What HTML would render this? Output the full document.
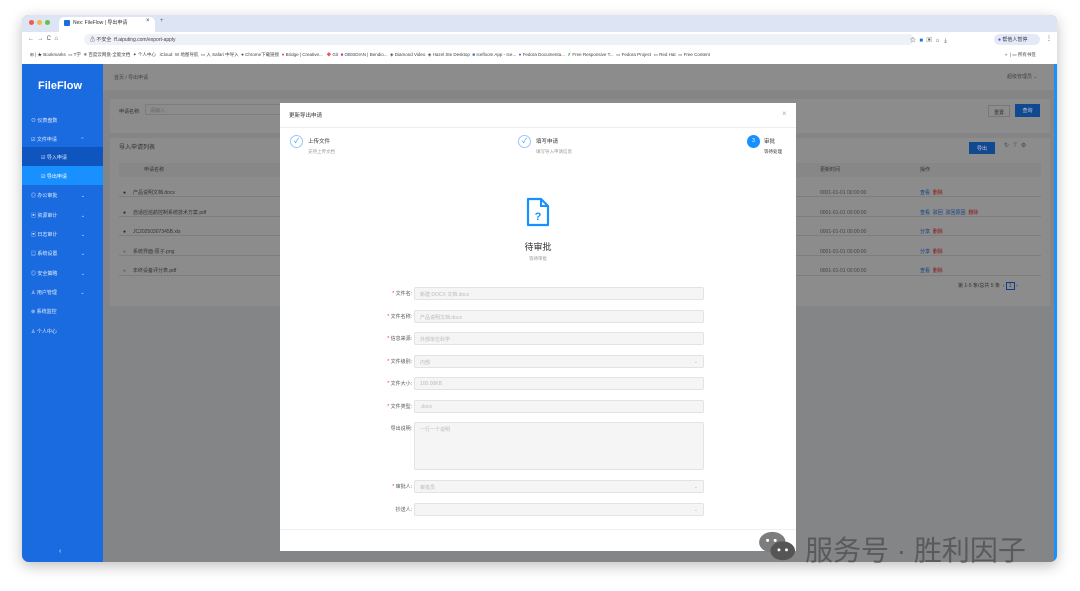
<!DOCTYPE html>
<html><head><meta charset="utf-8"><style>
*{box-sizing:border-box;margin:0;padding:0}
body{width:1080px;height:591px;background:#fff;font-family:"Liberation Sans","Noto Sans CJK SC",sans-serif;position:relative;overflow:hidden;font-size:6px;color:#333}
.a{position:absolute}
.win{left:22px;top:15px;width:1035px;height:547px;border-radius:7px;overflow:hidden;box-shadow:0 4px 14px rgba(0,0,0,.25);background:#848586}
.t{white-space:nowrap}
.row{border-bottom:1px solid #7e7e7e}
.lbl{width:52px;text-align:right;color:#555;font-size:5px}
.inp{left:134px;width:290px;height:13px;background:#f5f5f5;border:1px solid #e3e3e3;border-radius:2px;color:#bbb;font-size:5px;padding:3px 5px}
.star{color:#f5222d}
.side .it{position:absolute;left:9px;color:#dfe9fb;font-size:5px}
</style></head><body>
<div class="a win">
 <div class="a" style="left:0;top:0;width:1035px;height:17px;background:#dde4f3"></div>
 <div class="a" style="left:7px;top:5px;width:5px;height:5px;border-radius:50%;background:#ee5b55"></div>
 <div class="a" style="left:15px;top:5px;width:5px;height:5px;border-radius:50%;background:#f4b942"></div>
 <div class="a" style="left:23px;top:5px;width:5px;height:5px;border-radius:50%;background:#5fc447"></div>
 <div class="a" style="left:37px;top:2px;width:96px;height:15px;background:#fff;border-radius:5px 5px 0 0"></div>
 <div class="a" style="left:42px;top:5px;width:6px;height:6px;background:#1a6fe0;border-radius:1px"></div>
 <div class="a t" style="left:51px;top:4px;font-size:5px;color:#333">Nex: FileFlow | 导出申请</div>
 <div class="a t" style="left:124px;top:3px;font-size:6px">×</div>
 <div class="a t" style="left:138px;top:3px;font-size:6px;color:#666">+</div>
 <div class="a" style="left:0;top:17px;width:1035px;height:32px;background:#fff"></div>
 <div class="a t" style="left:6px;top:21px;font-size:6px;color:#555">←&nbsp; →&nbsp; C&nbsp; ⌂</div>
 <div class="a" style="left:62px;top:19px;width:830px;height:11px;background:#eef1f7;border-radius:6px"></div>
 <div class="a t" style="left:68px;top:21px;font-size:5px;color:#444">⚠ 不安全 &nbsp;ff.aiputing.com/export-apply</div>
 <div class="a t" style="left:888px;top:20px;font-size:6px;color:#555">☆ &nbsp;<span style="color:#1a6fe0">■</span>&nbsp; ▣ &nbsp;⌂ &nbsp; ⤓</div>
 <div class="a" style="left:972px;top:19px;width:46px;height:11px;background:#e3e9f7;border-radius:6px"></div>
 <div class="a t" style="left:976px;top:21px;font-size:5px;color:#334"><span style="color:#6a3fc8">●</span> 帮他人暂停</div>
 <div class="a t" style="left:1024px;top:20px;font-size:6px">⋮</div>
 <div class="a t" style="left:8px;top:37px;font-size:4.5px;color:#444">⊞ | ★ Bookmarks &nbsp;▭ T学 &nbsp;❄ 百度云网盘-全能文档 &nbsp;✦ 个人中心 &nbsp; iCloud &nbsp;W 地图导航 &nbsp;▭ 入 Safari 中导入 &nbsp;● Chrome下载链接 &nbsp;<span style="color:#e33">●</span> Bridge | Creative... &nbsp; <span style="color:#e55">◆</span> Git &nbsp;<span style="color:#c3a">■</span> OBSIDIAN | Bendio... &nbsp;◈ Diamond Video &nbsp;◈ Hazel Ste Desktop &nbsp;<span style="color:#36c">■</span> Icefloom App - Ice... &nbsp;<span style="color:#36c">●</span> Fedora Documenta... &nbsp;<span style="color:#3a3">✗</span> Free Responsive T... &nbsp;▭ Fedora Project &nbsp;▭ Red Hat &nbsp;▭ Free Content</div>
 <div class="a t" style="left:983px;top:37px;font-size:4.5px;color:#444">» &nbsp;| ▭ 所有书签</div>
 <div class="a side" style="left:0;top:49px;width:81px;height:498px;background:#1a6be0">
  <div class="a t" style="left:16px;top:16px;font-size:11px;font-weight:bold;color:#fff">FileFlow</div>
  <div class="it t" style="top:53px">⊙ 仪表盘数</div>
  <div class="it t" style="top:72px">☑ 文件申请 <span style="margin-left:22px">⌃</span></div>
  <div class="a" style="left:0;top:83px;width:81px;height:19px;background:#0e55bf"></div>
  <div class="it t" style="top:90px;left:19px">☑ 导入申请</div>
  <div class="a" style="left:0;top:102px;width:81px;height:19px;background:#1890ff"></div>
  <div class="it t" style="top:109px;left:19px;color:#fff">☑ 导出申请</div>
  <div class="it t" style="top:128px">◎ 办公审批 <span style="margin-left:22px">⌄</span></div>
  <div class="it t" style="top:148px">▣ 资源审计 <span style="margin-left:22px">⌄</span></div>
  <div class="it t" style="top:167px">▣ 日志审计 <span style="margin-left:22px">⌄</span></div>
  <div class="it t" style="top:186px">▤ 系统设置 <span style="margin-left:22px">⌄</span></div>
  <div class="it t" style="top:206px">◎ 安全策略 <span style="margin-left:22px">⌄</span></div>
  <div class="it t" style="top:225px">♙ 用户管理 <span style="margin-left:22px">⌄</span></div>
  <div class="it t" style="top:244px">⊛ 系统监控</div>
  <div class="it t" style="top:264px">♙ 个人中心</div>
  <div class="a t" style="left:37px;top:484px;color:#dfe9fb;font-size:7px">‹</div>
 </div>
 <div class="a" style="left:81px;top:49px;width:954px;height:26px;background:#8c8c8c"></div>
 <div class="a t" style="left:92px;top:59px;font-size:5px;color:#444">首页 / 导出申请</div>
 <div class="a t" style="left:985px;top:58px;font-size:5px;color:#444">超级管理员 ⌄</div>
 <div class="a" style="left:88px;top:84px;width:940px;height:34px;background:#8c8c8c"></div>
 <div class="a t" style="left:97px;top:93px;font-size:5px;color:#333">申请名称:</div>
 <div class="a" style="left:123px;top:89px;width:160px;height:11px;border:1px solid #7d7d7d;background:#8c8c8c;font-size:5px;color:#666;padding:2px 4px">请输入</div>
 <div class="a" style="left:966px;top:90px;width:22px;height:12px;background:#8c8c8c;border:1px solid #777;font-size:5px;text-align:center;padding-top:3px">重置</div>
 <div class="a" style="left:993px;top:89px;width:25px;height:13px;background:#10498f;color:#ccd;font-size:5px;text-align:center;padding-top:3px">查询</div>
 <div class="a" style="left:88px;top:123px;width:940px;height:168px;background:#8c8c8c"></div>
 <div class="a t" style="left:97px;top:127px;font-size:6px;color:#333">导入申请列表</div>
 <div class="a" style="left:947px;top:127px;width:26px;height:12px;background:#10498f;color:#ccd;font-size:5px;text-align:center;padding-top:3px">导出</div>
 <div class="a t" style="left:982px;top:127px;font-size:6px;color:#444">↻ &nbsp;⊤ &nbsp;⚙</div>
 <div class="a" style="left:97px;top:148px;width:922px;height:14px;background:#878787"></div>
 <div class="a t" style="left:122px;top:151px;font-size:5px;color:#333">申请名称</div>
 <div class="a t" style="left:798px;top:151px;font-size:5px;color:#333">更新时间</div>
 <div class="a t" style="left:898px;top:151px;font-size:5px;color:#333">操作</div>
 <div class="a" style="left:97px;top:162px;width:922px;height:100px">
  <div class="row a" style="top:0;width:922px;height:20px"></div>
  <div class="row a" style="top:20px;width:922px;height:20px"></div>
  <div class="row a" style="top:40px;width:922px;height:19px"></div>
  <div class="row a" style="top:59px;width:922px;height:20px"></div>
  <div class="row a" style="top:79px;width:922px;height:20px"></div>
 </div>
 <div class="a t" style="left:101px;top:169px;font-size:5px;color:#333;line-height:19.5px">
  <div><span style="color:#1c2b44">●</span> &nbsp; &nbsp; 产品说明文档.docx</div>
  <div><span style="color:#1c2b44">●</span> &nbsp; &nbsp; 自适应巡航控制系统技术方案.pdf</div>
  <div><span style="color:#1c2b44">●</span> &nbsp; &nbsp; JC20250307345B.xls</div>
  <div><span style="color:#666">●</span> &nbsp; &nbsp; 系统界面-原子.png</div>
  <div><span style="color:#666">●</span> &nbsp; &nbsp; 年终设备评分表.pdf</div>
 </div>
 <div class="a t" style="left:798px;top:169px;font-size:5px;color:#444;line-height:19.5px">
  <div>0001-01-01 00:00:00</div><div>0001-01-01 00:00:00</div><div>0001-01-01 00:00:00</div><div>0001-01-01 00:00:00</div><div>0001-01-01 00:00:00</div>
 </div>
 <div class="a t" style="left:898px;top:169px;font-size:5px;line-height:19.5px;color:#0e3f86">
  <div>查看 &nbsp;<span style="color:#8a1010">删除</span></div>
  <div>查看 &nbsp;驳回 &nbsp;驳回原因 &nbsp;<span style="color:#8a1010">删除</span></div>
  <div>分享 &nbsp;<span style="color:#8a1010">删除</span></div>
  <div>分享 &nbsp;<span style="color:#8a1010">删除</span></div>
  <div>查看 &nbsp;<span style="color:#8a1010">删除</span></div>
 </div>
 <div class="a t" style="left:936px;top:267px;font-size:5px;color:#333">第 1-5 条/总共 5 条 &nbsp;‹ <span style="border:1px solid #0e3f86;padding:0 2px;color:#0e3f86">1</span> ›</div>
 <div class="a" style="left:1032px;top:49px;width:3px;height:498px;background:#1890ff"></div>
 <div class="a" style="left:258px;top:88px;width:516px;height:448px;background:#fff">
  <div class="a t" style="left:9px;top:8px;font-size:5.5px;color:#333">更新导出申请</div>
  <div class="a t" style="left:502px;top:6px;font-size:8px;color:#aaa">×</div>
  <div class="a" style="left:0;top:24px;width:516px;height:1px;background:#eee"></div>
  <div class="a" style="left:10px;top:32px;width:13px;height:13px;border:1px solid #9cc6f7;border-radius:50%;color:#1890ff;font-size:7px;text-align:center;line-height:11px">✓</div>
  <div class="a t" style="left:28px;top:34px;font-size:5.5px;color:#333">上传文件</div>
  <div class="a t" style="left:28px;top:46px;font-size:4.5px;color:#999">支持上传文档</div>
  <div class="a" style="left:238px;top:32px;width:13px;height:13px;border:1px solid #9cc6f7;border-radius:50%;color:#1890ff;font-size:7px;text-align:center;line-height:11px">✓</div>
  <div class="a t" style="left:256px;top:34px;font-size:5.5px;color:#333">填写申请</div>
  <div class="a t" style="left:256px;top:46px;font-size:4.5px;color:#999">填写导入申请信息</div>
  <div class="a" style="left:467px;top:32px;width:13px;height:13px;background:#1890ff;border-radius:50%;color:#fff;font-size:5px;text-align:center;line-height:13px">3</div>
  <div class="a t" style="left:484px;top:34px;font-size:5.5px;color:#333">审批</div>
  <div class="a t" style="left:484px;top:46px;font-size:4.5px;color:#333">等待处理</div>
  <svg class="a" style="left:246px;top:94px" width="24" height="30" viewBox="0 0 24 30"><path d="M2 2h13l7 7v19H2z" fill="none" stroke="#1890ff" stroke-width="2.2" stroke-linejoin="round"/><path d="M15 2v7h7" fill="none" stroke="#1890ff" stroke-width="2"/><text x="12" y="23" font-size="11" font-weight="bold" fill="#1890ff" text-anchor="middle" font-family="Liberation Sans">?</text></svg>
  <div class="a t" style="left:0;width:516px;text-align:center;top:137px;font-size:9px;color:#333">待审批</div>
  <div class="a t" style="left:0;width:516px;text-align:center;top:153px;font-size:4.5px;color:#999">等待审批</div>
  <div class="a" style="left:0;top:184px;width:516px">
   <div class="a lbl t" style="left:80px;top:3px"><span class="star">* </span>文件名:</div><div class="a inp t" style="top:0">新建 DOCX 文档.docx</div>
   <div class="a lbl t" style="left:80px;top:26px"><span class="star">* </span>文件名称:</div><div class="a inp t" style="top:23px">产品说明文档.docx</div>
   <div class="a lbl t" style="left:80px;top:48px"><span class="star">* </span>信息来源:</div><div class="a inp t" style="top:45px">外部单位科学</div>
   <div class="a lbl t" style="left:80px;top:71px"><span class="star">* </span>文件级别:</div><div class="a inp t" style="top:68px">内部<span style="float:right">⌄</span></div>
   <div class="a lbl t" style="left:80px;top:93px"><span class="star">* </span>文件大小:</div><div class="a inp t" style="top:90px">100.00KB</div>
   <div class="a lbl t" style="left:80px;top:116px"><span class="star">* </span>文件类型:</div><div class="a inp t" style="top:113px">.docx</div>
   <div class="a lbl t" style="left:80px;top:138px">导出说明:</div><div class="a inp t" style="top:135px;height:48px">一行一个说明</div>
   <div class="a lbl t" style="left:80px;top:196px"><span class="star">* </span>审批人:</div><div class="a inp t" style="top:193px">审批员<span style="float:right">⌄</span></div>
   <div class="a lbl t" style="left:80px;top:219px">抄送人:</div><div class="a inp t" style="top:216px"><span style="float:right">⌄</span></div>
  </div>
  <div class="a" style="left:0;top:426px;width:516px;height:1px;background:#f0f0f0"></div>
 </div>
</div>
<svg class="a" style="left:757px;top:530px" width="42" height="34" viewBox="0 0 44 36"><ellipse cx="16" cy="13" rx="14" ry="11" fill="#7d7d7d"/><ellipse cx="27" cy="22" rx="13" ry="10" fill="#555"/><circle cx="11" cy="11" r="1.6" fill="#fff"/><circle cx="19" cy="11" r="1.6" fill="#fff"/><circle cx="23" cy="21" r="1.5" fill="#fff"/><circle cx="31" cy="21" r="1.5" fill="#fff"/></svg>
<div class="a t" style="left:805px;top:529px;font-size:28px;color:#5a5a5a;font-family:'Liberation Sans','Noto Sans CJK SC',sans-serif">服务号 · 胜利因子</div>
</body></html>
